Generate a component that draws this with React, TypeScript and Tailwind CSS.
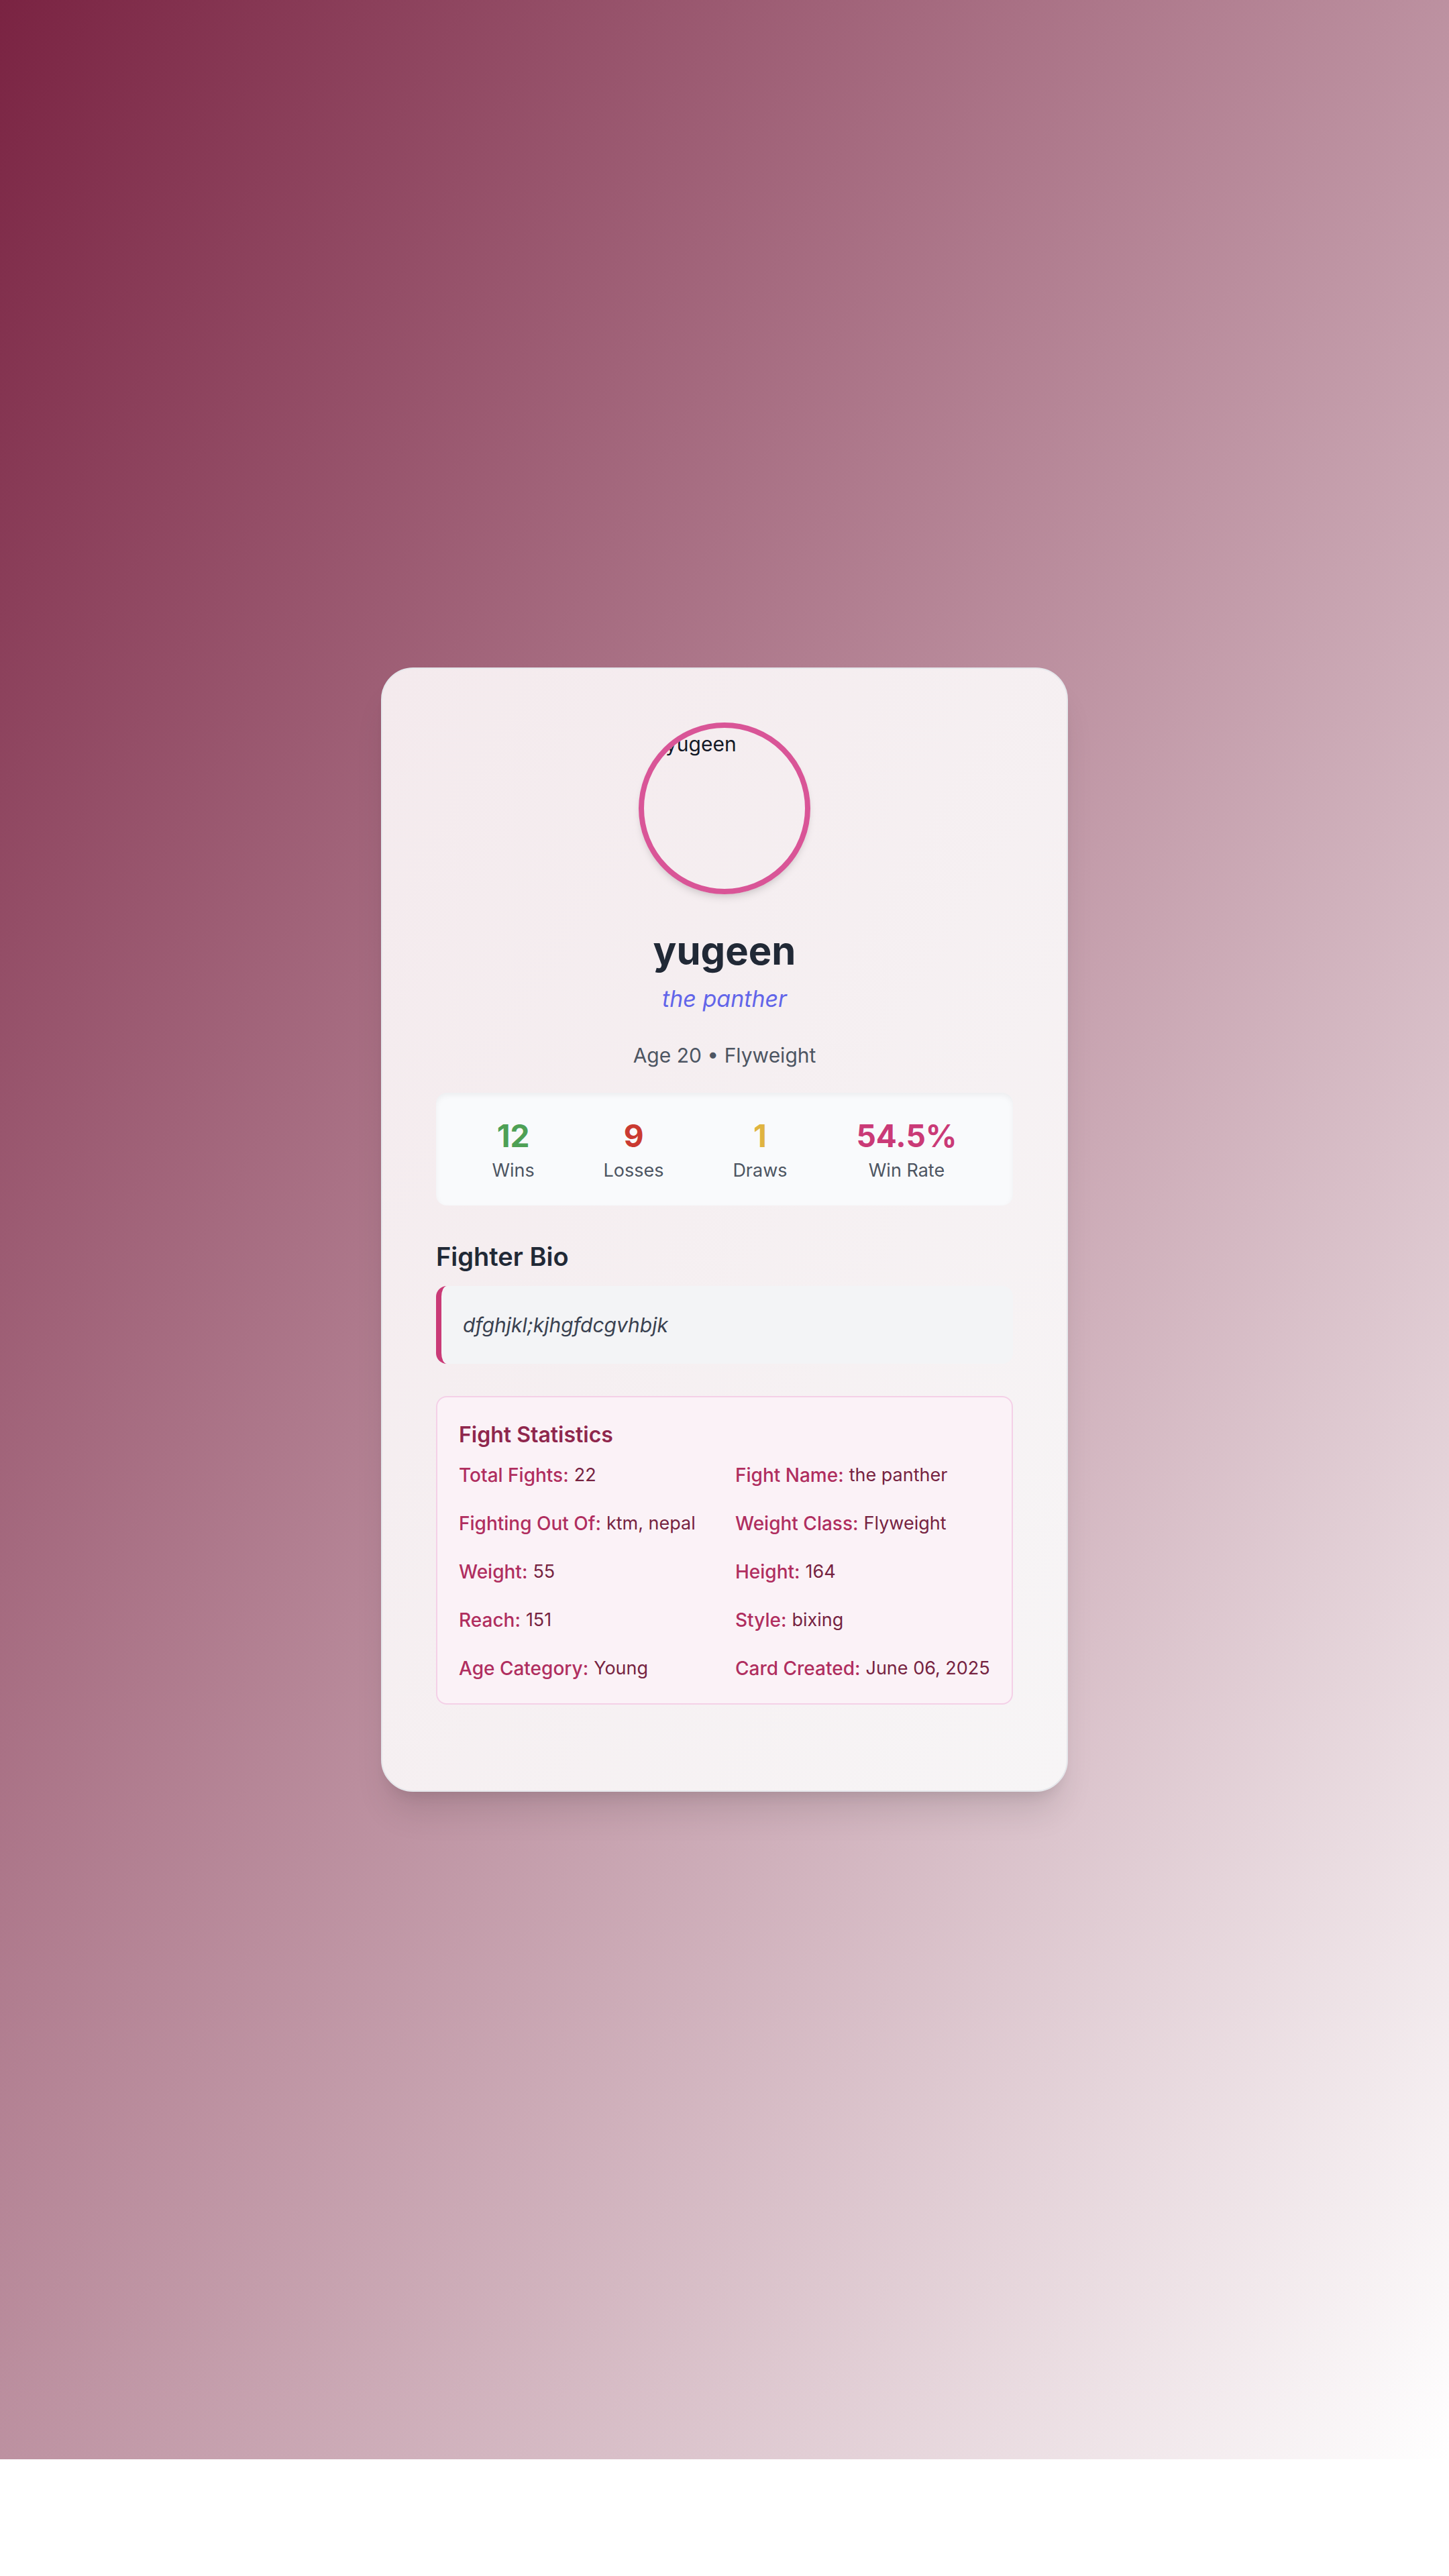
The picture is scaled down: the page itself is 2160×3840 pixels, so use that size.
const record = [
  { value: "12", label: "Wins", color: "text-[#4ea055]" },
  { value: "9", label: "Losses", color: "text-[#ca3a31]" },
  { value: "1", label: "Draws", color: "text-[#e0b440]" },
  { value: "54.5%", label: "Win Rate", color: "text-[#ca3a77]" },
];

const details = [
  ["Total Fights", "22"],
  ["Fight Name", "the panther"],
  ["Fighting Out Of", "ktm, nepal"],
  ["Weight Class", "Flyweight"],
  ["Weight", "55"],
  ["Height", "164"],
  ["Reach", "151"],
  ["Style", "bixing"],
  ["Age Category", "Young"],
  ["Card Created", "June 06, 2025"],
];

export default function App() {
  return (
    <div className="flex min-h-screen flex-col bg-white pb-[174px] font-['Inter',sans-serif] text-[30px] leading-[48px] text-[#131826]">
      <main className="flex flex-1 items-center justify-center bg-linear-to-br/srgb from-[#7a2342] to-white p-8">
        <article className="w-full max-w-[1024px] rounded-[48px] border-2 border-[#e5e7eb] bg-linear-to-br/srgb from-[#f4eaed] to-[#f7f5f6] p-20 shadow-[0_40px_50px_-10px_rgba(0,0,0,0.1),0_16px_20px_-12px_rgba(0,0,0,0.1)]">
          <header className="flex flex-col items-center text-center">
            <div className="mb-12 size-64 overflow-hidden rounded-full border-8 border-[#d95597] pl-8 text-left shadow-[0_8px_12px_-2px_rgba(0,0,0,0.1),0_4px_8px_-4px_rgba(0,0,0,0.1)]">
              yugeen
            </div>
            <h1 className="text-[58px] leading-[72px] font-bold text-[#212936]">yugeen</h1>
            <p className="mt-2 text-[34px] leading-[56px] text-[#6265e9] italic">the panther</p>
            <p className="mt-8 text-[#4d5562]">Age 20 • Flyweight</p>
          </header>

          <dl className="mt-8 flex justify-around rounded-2xl bg-[#f9fafc] p-8 text-center inset-shadow-[0_4px_8px_rgba(0,0,0,0.05)]">
            {record.map(({ value, label, color }) => (
              <div key={label} className="flex flex-col-reverse">
                <dt className="text-[27px] leading-10 text-[#4d5562]">{label}</dt>
                <dd className={`text-[46px] leading-[64px] font-bold ${color}`}>{value}</dd>
              </div>
            ))}
          </dl>

          <section className="mt-12">
            <h2 className="text-[38px] leading-[56px] font-semibold text-[#212936]">Fighter Bio</h2>
            <p className="mt-4 rounded-2xl border-l-8 border-[#ca3a77] bg-[#f3f4f6] p-8 leading-[52px] text-[#394150] italic">
              dfghjkl;kjhgfdcgvhbjk
            </p>
          </section>

          <section className="my-12 rounded-2xl border-2 border-[#f4d0e7] bg-[#fbf2f7] p-8">
            <h3 className="text-[32px] font-semibold text-[#8f274d] leading-[48px]">Fight Statistics</h3>
            <dl className="mt-4 grid grid-cols-2 gap-8 leading-10 text-[#762341]">
              {details.map(([label, value]) => (
                <div key={label} className="flex gap-2 whitespace-nowrap">
                  <dt className="text-[28px] leading-10 font-medium text-[#b02e5f]">{label}:</dt>
                  <dd className="text-[27px] leading-10">{value}</dd>
                </div>
              ))}
            </dl>
          </section>
        </article>
      </main>
    </div>
  );
}
